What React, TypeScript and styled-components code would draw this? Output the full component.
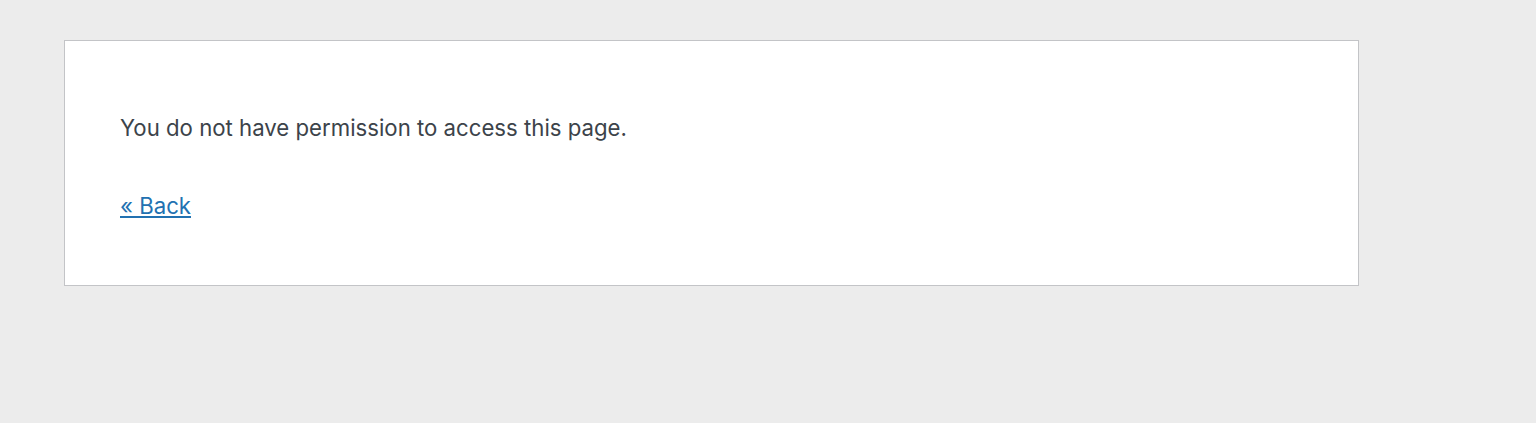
import React from 'react';
import styled, { createGlobalStyle } from 'styled-components';

const GlobalStyle = createGlobalStyle`
  html, body {
    margin: 0;
    padding: 0;
    background: #ececec;
  }
`;

const Page = styled.div`
  min-height: 423px;
  padding: 40px 0 0 64px;
  box-sizing: border-box;
  font-family: Inter, "Liberation Sans", sans-serif;
`;

const ErrorCard = styled.div`
  width: 1295px;
  box-sizing: border-box;
  background: #fff;
  border: 1px solid #c3c4c7;
  padding: 72px 55px 64px;
  display: flex;
  flex-direction: column;
  gap: 48px;
`;

const Message = styled.p`
  margin: 0;
  font-size: 22.2px;
  line-height: 30px;
  color: #3c434a;
`;

const BackLink = styled.a`
  align-self: flex-start;
  font-size: 22.2px;
  line-height: 30px;
  color: #2271b1;
  text-decoration: underline;
`;

export default function App() {
  return (
    <>
      <GlobalStyle />
      <Page>
        <ErrorCard>
          <Message>You do not have permission to access this page.</Message>
          <BackLink href="#">« Back</BackLink>
        </ErrorCard>
      </Page>
    </>
  );
}
